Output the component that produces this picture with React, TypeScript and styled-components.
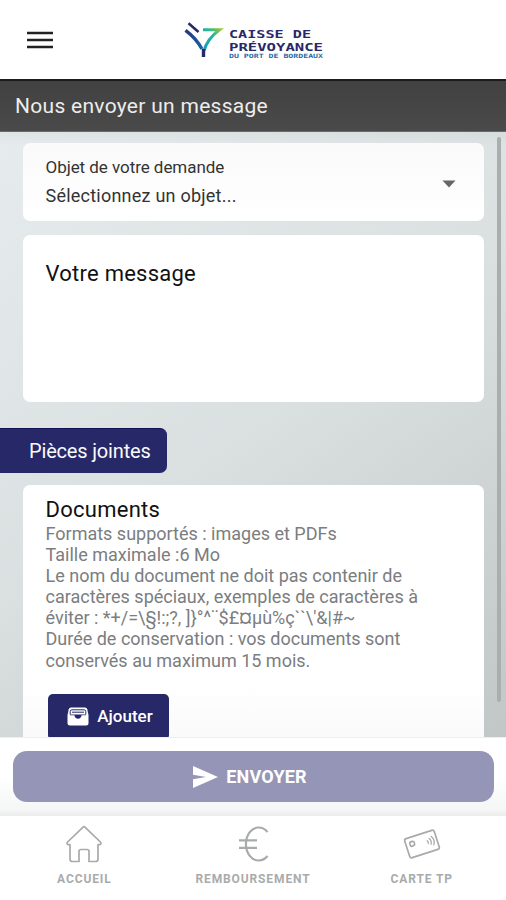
import React from "react";
import styled, { createGlobalStyle } from "styled-components";

const GlobalStyle = createGlobalStyle`
  * { box-sizing: border-box; }
  body { margin: 0; font-family: Roboto, "Liberation Sans", sans-serif; overflow: hidden; }
  button { font-family: inherit; border: 0; padding: 0; cursor: pointer; }
  h1, h2, p { margin: 0; font-weight: 400; }
`;

const Screen = styled.div`
  width: 506px;
  height: 900px;
  display: flex;
  flex-direction: column;
  overflow: hidden;
  background: #fff;
`;

const Header = styled.header`
  flex: 0 0 79px;
  display: grid;
  grid-template-columns: 184px 1fr;
  align-items: center;
  background: #fff;
`;

const MenuButton = styled.button`
  width: 26px;
  height: 18px;
  margin-left: 27px;
  background: none;
  display: flex;
  svg { display: block; }
`;

const TitleBar = styled.div`
  flex: 0 0 53px;
  display: flex;
  align-items: center;
  padding-left: 15px;
  background: linear-gradient(#414141, #4a4a4a);
  border-top: 2px solid #1c1c1c;
  border-bottom: 1px solid #696a6a;
  color: #ededed;
`;

const Title = styled.h1`
  font-size: 21px;
  line-height: 26px;
  letter-spacing: 0.29px;
`;

const Content = styled.main`
  flex: 1 1 0;
  min-height: 0;
  display: grid;
  grid-template-columns: 1fr 22px;
  overflow: hidden;
  background:
    linear-gradient(rgba(0, 0, 0, 0.03), rgba(0, 0, 0, 0) 14px),
    linear-gradient(145deg, #e6ebed 0%, #dadfe0 50%, #c0c7c6 100%);
`;

const Column = styled.div`
  padding-top: 11px;
  display: flex;
  flex-direction: column;
  align-items: flex-start;
  min-height: 0;
  overflow: hidden;
`;

const ScrollTrack = styled.div`
  padding: 5px 0 0 13px;
`;

const ScrollThumb = styled.div`
  width: 4px;
  height: 565px;
  border-radius: 2px;
  background: #a9aeaf;
`;

const Card = styled.section<{ $height: number }>`
  flex: 0 0 ${(p) => p.$height}px;
  width: 461px;
  margin-left: 23px;
  padding: 0 28px 0 22.5px;
  border-radius: 7px;
  background: #fff;
`;

const SelectCard = styled(Card)`
  display: flex;
  align-items: center;
  justify-content: space-between;
  padding-top: 3px;
  background: linear-gradient(#fafafa, #fff);
  margin-bottom: 14px;
`;

const SelectLabel = styled.p`
  font-size: 17px;
  line-height: 24px;
  letter-spacing: -0.05px;
  color: #333;
`;

const SelectValue = styled.p`
  font-size: 18px;
  line-height: 33px;
  letter-spacing: 0.23px;
  color: #333;
`;

const MessageCard = styled(Card)`
  padding-top: 24px;
  margin-bottom: 26px;
`;

const FieldTitle = styled.h2`
  font-size: 22px;
  line-height: 30px;
  letter-spacing: 0.25px;
  color: #111;
`;

const SectionTag = styled.h2`
  flex: 0 0 45px;
  width: 167px;
  margin-bottom: 12px;
  padding-left: 29px;
  font-size: 20px;
  line-height: 44px;
  letter-spacing: -0.17px;
  color: #fafafa;
  background: #262868;
  border-top: 1px solid #111356;
  border-radius: 0 7px 7px 0;
`;

const DocumentsCard = styled(Card)`
  padding-top: 12px;
  background: linear-gradient(#fff 200px, #fafafa 252px);
`;

const DocumentsTitle = styled.h2`
  font-size: 22px;
  line-height: 26px;
  letter-spacing: 0.26px;
  color: #111;
`;

const HelpText = styled.div`
  font-size: 18px;
  line-height: 21.1px;
  letter-spacing: 0;
  color: #7b7d80;
  white-space: nowrap;
`;

const AddButton = styled.button`
  width: 121px;
  height: 46px;
  margin: 23.3px 0 0 2.5px;
  display: flex;
  align-items: center;
  justify-content: center;
  gap: 8px;
  padding: 0 0 1px 3px;
  border-radius: 5px;
  color: #fff;
  font-size: 17px;
  font-weight: 500;
  letter-spacing: 0;
  background: #262868;
`;

const SendBar = styled.div`
  flex: 0 0 79px;
  padding: 13px 12px 0 13px;
  background: linear-gradient(#fff 50%, #f5f6f6 92%, #ececec);
  border-top: 1px solid #eee;
`;

const SendButton = styled.button`
  width: 481px;
  height: 51px;
  display: flex;
  align-items: center;
  justify-content: center;
  gap: 8px;
  padding-right: 7px;
  border-radius: 14px;
  color: #fff;
  background: #9596b7;
  font-size: 18px;
  font-weight: 700;
  letter-spacing: 0.15px;
`;

const TabBar = styled.nav`
  flex: 0 0 84px;
  display: grid;
  grid-template-columns: repeat(3, 1fr);
  background: #fff;
`;

const Tab = styled.button`
  display: flex;
  flex-direction: column;
  align-items: center;
  padding-top: 9px;
  gap: 9px;
  background: none;
  color: #a9abab;
`;

const TabLabel = styled.span`
  font-size: 12px;
  line-height: 14px;
  font-weight: 700;
  letter-spacing: 0.88px;
`;

const MenuIcon = () => (
  <svg width="26" height="18" viewBox="0 0 26 18" stroke="#222" strokeWidth="2.3">
    <path d="M0 2h26M0 9h26M0 16h26" />
  </svg>
);

const Logo = () => (
  <svg width="142" height="40" viewBox="0 0 142 40" fill="none" aria-label="Caisse de Prévoyance">
    <defs>
      <linearGradient id="bar" x1="19" y1="25" x2="38" y2="9" gradientUnits="userSpaceOnUse">
        <stop stopColor="#159bbd" />
        <stop offset=".55" stopColor="#27b79b" />
        <stop offset="1" stopColor="#a3c62c" />
      </linearGradient>
      <linearGradient id="stem" x1="2" y1="10" x2="18" y2="28" gradientUnits="userSpaceOnUse">
        <stop stopColor="#29377e" />
        <stop offset="1" stopColor="#1b5fa5" />
      </linearGradient>
    </defs>
    <path d="M4.5 3.3 14.5 12" stroke="#2b2a68" strokeWidth="2.6" />
    <path d="M1.5 10.3 Q12 18 18 29" stroke="url(#stem)" strokeWidth="3.4" />
    <path d="M19 9.7H35.500Q23 19 20 31" stroke="url(#bar)" strokeWidth="3" strokeLinejoin="miter" />
    <path d="M19.5 29V37" stroke="#27296b" strokeWidth="3.4" />
    <g fill="#29286a" fontFamily="DejaVu Sans Mono" fontWeight="700">
      <text x="45" y="18" fontSize="11.3" textLength="82" lengthAdjust="spacingAndGlyphs">CAISSE DE</text>
      <text x="45" y="30.5" fontSize="11.3" textLength="94" lengthAdjust="spacingAndGlyphs">PRÉVOYANCE</text>
      <text x="45" y="38.3" fontSize="5.8" fill="#2a6aa1" textLength="94" lengthAdjust="spacingAndGlyphs">DU PORT DE BORDEAUX</text>
    </g>
  </svg>
);

const CaretIcon = () => (
  <svg width="14" height="8" viewBox="0 0 14 8"><path d="M.5.5h13L7 7.5z" fill="#666" /></svg>
);

const TrayIcon = () => (
  <svg width="22" height="19" viewBox="0 0 22 19" fill="none">
    <path d="M4 .5h14a2.5 2.5 0 0 1 2.2 1.8L21.5 8v8a2.5 2.5 0 0 1-2.5 2.5H3A2.5 2.5 0 0 1 .5 16V8L1.8 2.3A2.5 2.5 0 0 1 4 .5z" fill="#fff" />
    <path d="M3.2 7.5V4.5q0-1.7 1.7-1.7h12.2q1.7 0 1.7 1.7v3M5 5.2h12" stroke="#262868" strokeWidth="1" />
    <path d="M3 7.4h16v.9h-4.4q-.5 3.4-3.6 3.4T7.4 8.3H3z" fill="#262868" />
  </svg>
);

const SendIcon = () => (
  <svg width="25" height="22" viewBox="0 0 25 22"><path d="M0 0 25 11 0 22V13.3L13 11 0 8.7z" fill="#fff" /></svg>
);

const HomeIcon = () => (
  <svg width="36" height="38" viewBox="0 0 36 38" fill="none" stroke="#a9abab" strokeWidth="1.7" strokeLinejoin="round">
    <path d="M16.8 2.3a1.7 1.7 0 0 1 2.4 0L34.4 17c1.1 1.2.4 2.7-1.2 2.7H32V34a2.5 2.5 0 0 1-2.5 2.5H23v-10a2 2 0 0 0-2-2h-6a2 2 0 0 0-2 2v10H6.5A2.5 2.5 0 0 1 4 34V19.7H2.8c-1.6 0-2.3-1.5-1.2-2.7z" />
  </svg>
);

const EuroIcon = () => (
  <svg width="36" height="38" viewBox="0 0 36 38" fill="none" stroke="#a9abab" strokeWidth="2.2">
    <path d="M32.5 7A12.8 16.5 0 1 0 32.5 31M4 15.3h18M4 22.8h18" />
  </svg>
);

const CardIcon = () => (
  <svg width="38" height="38" viewBox="0 0 38 38" fill="none" stroke="#a9abab" strokeWidth="1.7" strokeLinecap="round">
    <g transform="rotate(-18 19 19)">
      <rect x="3.5" y="9" width="31" height="20" rx="2" />
      <rect x="7.5" y="13.5" width="4.5" height="4.5" rx="1.5" />
      <path d="M25 17.5q1 1.5 0 3M27.5 16q2 3 0 6M30 14.5q3 4.5 0 9" strokeWidth="1.3" />
    </g>
  </svg>
);

const TABS = [
  { label: "ACCUEIL", icon: <HomeIcon /> },
  { label: "REMBOURSEMENT", icon: <EuroIcon /> },
  { label: "CARTE TP", icon: <CardIcon /> },
];

const HELP_LINES = [
  "Formats supportés : images et PDFs",
  "Taille maximale :6 Mo",
  "Le nom du document ne doit pas contenir de",
  "caractères spéciaux, exemples de caractères à",
  "éviter : *+/=\\§!:;?, ]}°^¨$£¤µù%ç``\\'&|#~",
  "Durée de conservation : vos documents sont",
  "conservés au maximum 15 mois.",
];

export default function App() {
  return (
    <Screen>
      <GlobalStyle />
      <Header>
        <MenuButton aria-label="Menu"><MenuIcon /></MenuButton>
        <Logo />
      </Header>
      <TitleBar><Title>Nous envoyer un message</Title></TitleBar>
      <Content>
        <Column>
          <SelectCard $height={78}>
            <div>
              <SelectLabel>Objet de votre demande</SelectLabel>
              <SelectValue>Sélectionnez un objet...</SelectValue>
            </div>
            <CaretIcon />
          </SelectCard>
          <MessageCard $height={167}><FieldTitle>Votre message</FieldTitle></MessageCard>
          <SectionTag>Pièces jointes</SectionTag>
          <DocumentsCard $height={280}>
            <DocumentsTitle>Documents</DocumentsTitle>
            <HelpText>{HELP_LINES.map((line) => <p key={line}>{line}</p>)}</HelpText>
            <AddButton><TrayIcon />Ajouter</AddButton>
          </DocumentsCard>
        </Column>
        <ScrollTrack><ScrollThumb /></ScrollTrack>
      </Content>
      <SendBar><SendButton><SendIcon />ENVOYER</SendButton></SendBar>
      <TabBar>
        {TABS.map((tab) => (
          <Tab key={tab.label}>{tab.icon}<TabLabel>{tab.label}</TabLabel></Tab>
        ))}
      </TabBar>
    </Screen>
  );
}
